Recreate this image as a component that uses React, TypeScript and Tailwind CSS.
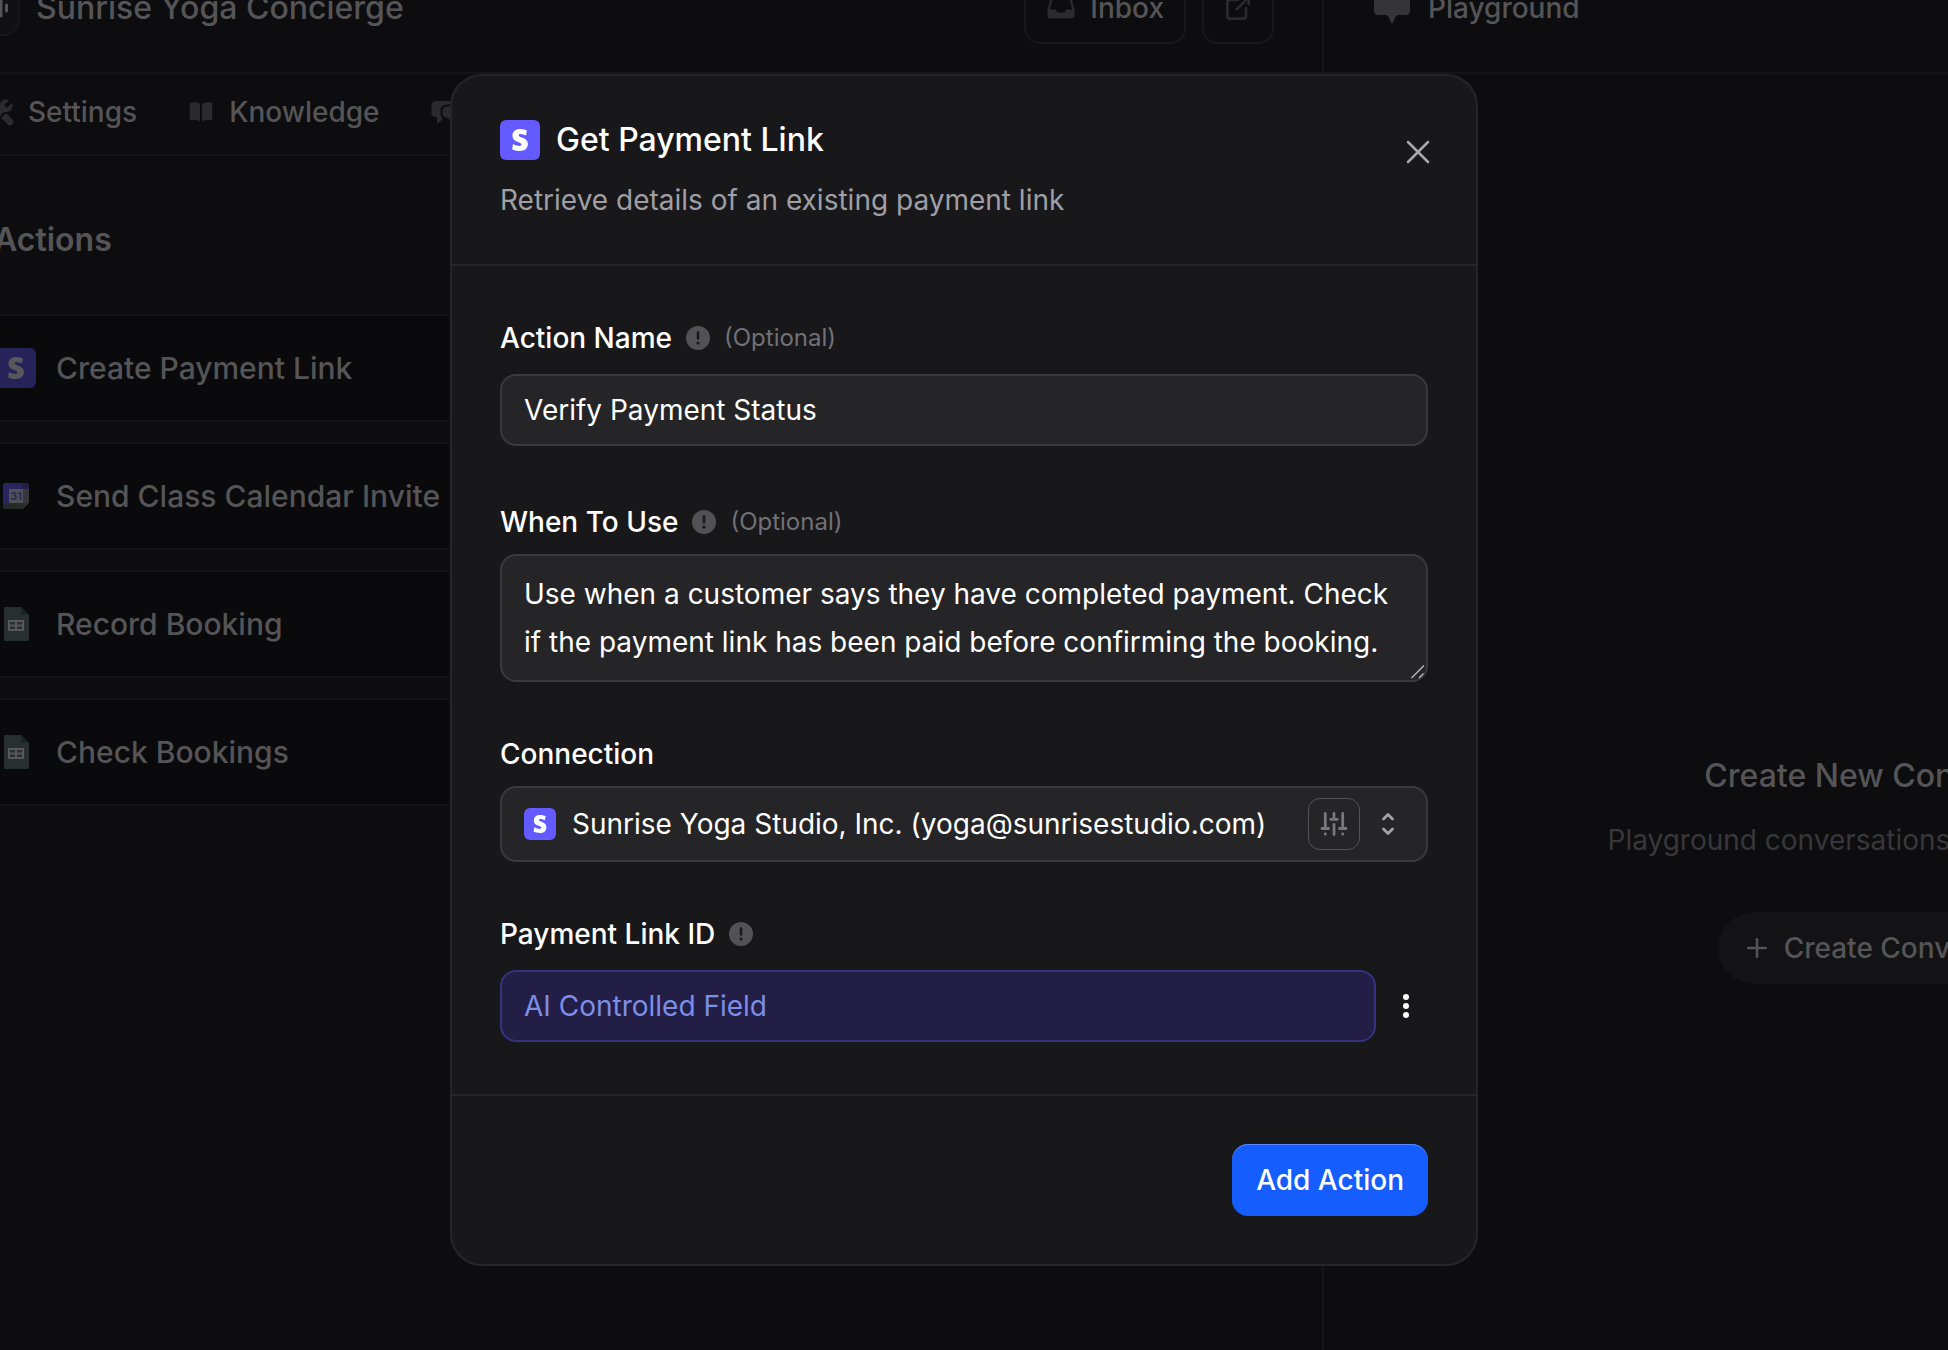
import type { ReactNode } from "react";
import { Plus, X } from "lucide-react";
import {
  HiMiniBookOpen,
  HiMiniChatBubbleLeftRight,
  HiMiniInbox,
  HiMiniWrenchScrewdriver,
} from "react-icons/hi2";
import { SiStripe } from "react-icons/si";
import { TbExternalLink } from "react-icons/tb";

function StripeLogo() {
  return (
    <span className="flex size-10 shrink-0 items-center justify-center rounded-md bg-[#635bff] text-white">
      <SiStripe size={22} />
    </span>
  );
}

function DimStripeLogo() {
  return (
    <span className="flex size-10 items-center justify-center rounded-md bg-[#27235a] text-[#58585b]">
      <SiStripe size={22} />
    </span>
  );
}

function CalendarLogo() {
  return (
    <svg viewBox="0 0 40 40" className="size-10">
      <path d="M9 7h17v6H13v14H7V9a2 2 0 0 1 2-2z" fill="#282560" />
      <path d="M26 7h5a2 2 0 0 1 2 2v4h-7z" fill="#231f4c" />
      <path d="M27 13h6v14h-6z" fill="#38383c" />
      <path d="M13 27h14v6H13z" fill="#262b2a" />
      <path d="M7 27h6v6H9a2 2 0 0 1-2-2z" fill="#232a2a" />
      <path d="M27 27h6l-6 6z" fill="#303034" />
      <path d="M13 13h14v14H13z" fill="#515155" />
      <text
        x="20"
        y="24"
        textAnchor="middle"
        fontSize="11"
        fontWeight="600"
        fill="#28245c"
      >
        31
      </text>
    </svg>
  );
}

function SheetsLogo() {
  return (
    <svg viewBox="0 0 40 40" className="size-10">
      <path d="M10 3h15l8 8v24a2 2 0 0 1-2 2H10a2 2 0 0 1-2-2V5a2 2 0 0 1 2-2z" fill="#28302e" />
      <path d="M25 3l8 8h-6a2 2 0 0 1-2-2z" fill="#1d2422" />
      <rect x="13" y="17" width="14" height="9" fill="none" stroke="#58585b" strokeWidth="2" />
      <path d="M20 17v9M13 21.5h14" stroke="#58585b" strokeWidth="2" />
    </svg>
  );
}

function InfoIcon() {
  return (
    <svg viewBox="0 0 24 24" className="size-6 shrink-0">
      <circle cx="12" cy="12" r="12" fill="#525256" />
      <path d="M12 6.5v6" stroke="#18181a" strokeWidth="2.5" strokeLinecap="round" />
      <circle cx="12" cy="17" r="1.6" fill="#18181a" />
    </svg>
  );
}

function Label({
  htmlFor,
  children,
  info,
  optional,
}: {
  htmlFor: string;
  children: ReactNode;
  info?: boolean;
  optional?: boolean;
}) {
  return (
    <div className="flex h-10 items-center">
      <label htmlFor={htmlFor} className="text-[28px] font-medium text-white">
        {children}
      </label>
      {info && (
        <span className="ml-3.5">
          <InfoIcon />
        </span>
      )}
      {optional && <span className="ml-3.5 text-2xl text-[#717177]">(Optional)</span>}
    </div>
  );
}

const actions = [
  { name: "Create Payment Link", logo: <DimStripeLogo /> },
  { name: "Send Class Calendar Invite", logo: <CalendarLogo /> },
  { name: "Record Booking", logo: <SheetsLogo /> },
  { name: "Check Bookings", logo: <SheetsLogo /> },
];

function AgentPage() {
  return (
    <main className="min-w-0 flex-1 border-r-2 border-[#151517]">
      <header className="flex h-[130px] items-center gap-4 border-b-2 border-[#151517] px-12">
        <span className="flex size-14 items-center justify-center rounded-2xl border-2 border-[#18181b] bg-[#111113]">
          <svg
            viewBox="0 0 32 32"
            className="size-8 overflow-visible"
            stroke="#555558"
            strokeWidth="3"
            strokeLinecap="round"
          >
            <path d="M1.500 13v6M7 8v16M13 3v26M19 3v26M25 8v16M30.500 13v6" />
          </svg>
        </span>
        <h1 className="text-[32px] font-medium text-[#555558]">Sunrise Yoga Concierge</h1>
        <button className="ml-auto flex h-18 items-center gap-3.5 rounded-2xl border-2 border-[#18181b] px-5 text-[28px] font-medium text-[#555558]">
          <HiMiniInbox size={30} className="text-[#2b2b2e]" />
          Inbox
        </button>
        <button
          aria-label="Open in new tab"
          className="flex size-18 items-center justify-center rounded-2xl border-2 border-[#18181b] text-[#2b2b2e]"
        >
          <TbExternalLink size={32} />
        </button>
      </header>

      <nav className="flex h-[82px] items-center gap-[50px] border-b-2 border-[#151517] pb-1 pl-[70px] text-[28px] font-medium text-[#555558]">
        <a href="#settings" className="flex items-center gap-3.5">
          <HiMiniWrenchScrewdriver size={28} className="text-[#2b2b2e]" />
          Settings
        </a>
        <a href="#knowledge" className="flex items-center gap-3.5">
          <HiMiniBookOpen size={28} className="text-[#2b2b2e]" />
          Knowledge
        </a>
        <a href="#conversations" aria-label="Conversations">
          <HiMiniChatBubbleLeftRight size={28} className="text-[#2b2b2e]" />
        </a>
      </nav>

      <section className="px-12 pt-16">
        <h2 className="pl-[30px] text-[32px] leading-10 font-semibold text-[#555558]">Actions</h2>
        <ul className="mt-[54px] flex flex-col gap-5">
          {actions.map((action) => (
            <li
              key={action.name}
              className="flex h-[108px] items-center gap-5 rounded-2xl border-2 border-[#131315] bg-[#0a0a0c] px-[30px] text-[30px] font-medium text-[#555558]"
            >
              {action.logo}
              {action.name}
            </li>
          ))}
        </ul>
      </section>
    </main>
  );
}

function Playground() {
  return (
    <aside className="flex w-[1152px] shrink-0 flex-col">
      <header className="flex h-[130px] items-center gap-4 border-b-2 border-[#151517] px-12">
        <svg viewBox="0 0 40 40" className="size-10" fill="#353538">
          <path d="M7 0h26a5 5 0 0 1 5 5v18a4 4 0 0 1-4 4h-7c-2 0-3 1-4 3l-2 4.500a1 1 0 0 1-2 0L17 30c-1-2-2-3-4-3H6a4 4 0 0 1-4-4V5a5 5 0 0 1 5-5z" />
        </svg>
        <h2 className="text-[28px] font-medium text-[#555558]">Playground</h2>
      </header>
      <div className="flex flex-col items-center pt-[682px] text-[#555558]">
        <h3 className="text-[32px] leading-10 font-medium">Create New Conversation</h3>
        <p className="mt-6 text-[28px] leading-10 text-[#38383b]">
          Playground conversations are not monitored
        </p>
        <button className="mt-[52px] flex h-18 items-center gap-3 rounded-full bg-[#131315] px-6 text-[28px] font-medium">
          <Plus size={30} />
          Create Conversation
        </button>
      </div>
    </aside>
  );
}

function ActionDialog() {
  return (
    <div
      role="dialog"
      aria-labelledby="dialog-title"
      className="w-[1028px] rounded-[32px] border-2 border-[#262628] bg-[#18181a]"
    >
      <header className="flex justify-between border-b-2 border-[#262628] px-12 py-11">
        <div>
          <div className="flex h-10 items-center gap-4">
            <StripeLogo />
            <h2 id="dialog-title" className="text-[32px] font-medium text-white">
              Get Payment Link
            </h2>
          </div>
          <p className="mt-5 text-[28px] leading-10 text-[#9f9fa5]">
            Retrieve details of an existing payment link
          </p>
        </div>
        <button aria-label="Close" className="-mr-2.5 mt-3 size-10 text-[#a9a9ad]">
          <X size={40} strokeWidth={1.5} />
        </button>
      </header>

      <form className="px-12 py-[52px] text-[28px]">
        <Label htmlFor="action-name" info optional>
          Action Name
        </Label>
        <input
          id="action-name"
          defaultValue="Verify Payment Status"
          className="mt-4 block h-18 w-full rounded-2xl border-2 border-[#3a3a3c] bg-[#252527] px-[22px] text-white"
        />

        <div className="mt-14">
          <Label htmlFor="when-to-use" info optional>
            When To Use
          </Label>
          <div className="relative mt-3">
            <textarea
              id="when-to-use"
              rows={2}
              defaultValue="Use when a customer says they have completed payment. Check if the payment link has been paid before confirming the booking."
              className="block h-32 w-full resize-none overflow-hidden rounded-2xl border-2 border-[#3a3a3c] bg-[#252527] px-[22px] py-3.5 leading-12 text-white"
            />
            {/* Resize grip */}
            <svg
              viewBox="0 0 16 16"
              className="pointer-events-none absolute right-0.5 bottom-0.5 size-4"
              stroke="#b4b4b6"
              strokeWidth="1.5"
            >
              <path d="M1.500 14 14 1.500M9 14l4.500-4.500" />
            </svg>
          </div>
        </div>

        <div className="mt-[52px]">
          <Label htmlFor="connection">Connection</Label>
          <div className="mt-3 flex h-[76px] items-center rounded-2xl border-2 border-[#3a3a3c] bg-[#252527] pr-6 pl-[22px]">
            <span className="flex size-8 shrink-0 items-center justify-center rounded-md bg-[#635bff] text-white">
              <SiStripe size={18} />
            </span>
            <select
              id="connection"
              className="ml-4 h-full min-w-0 flex-1 appearance-none bg-transparent text-white"
            >
              <option>Sunrise Yoga Studio, Inc. (yoga@sunrisestudio.com)</option>
            </select>
            <button
              type="button"
              aria-label="Manage connections"
              className="flex size-13 items-center justify-center rounded-xl border border-[#545458]"
            >
              <svg
                viewBox="0 0 28 28"
                className="size-7"
                fill="none"
                stroke="#77777d"
                strokeWidth="2.8"
                strokeLinecap="round"
              >
                <path d="M5.300 3.500v15M2 18.500h6.600M5.300 24v.2" />
                <path d="M14 3.500v5.800M10.700 9.300h6.600M14 14.500v10" />
                <path d="M22.700 3.500v15M19.400 18.500H26M22.700 24v.2" />
              </svg>
            </button>
            <svg
              viewBox="0 0 28 28"
              className="ml-3.5 size-7"
              fill="none"
              stroke="#a2a2a7"
              strokeWidth="2.8"
              strokeLinecap="round"
              strokeLinejoin="round"
            >
              <path d="M9.500 9 14 4.500 18.500 9M9.500 19l4.500 4.500 4.500-4.500" />
            </svg>
          </div>
        </div>

        <div className="mt-[52px]">
          <Label htmlFor="payment-link-id" info>
            Payment Link ID
          </Label>
          <div className="mt-4 flex items-center gap-2">
            <input
              id="payment-link-id"
              placeholder="AI Controlled Field"
              className="h-18 min-w-0 flex-1 rounded-2xl border-2 border-[#35327f] bg-[#231e46] px-[22px] placeholder:text-[#7c8ee6]"
            />
            <button
              type="button"
              aria-label="Field options"
              className="flex size-11 items-center justify-center"
            >
              <svg viewBox="0 0 24 24" className="size-6" fill="white">
                <circle cx="12" cy="3" r="3" />
                <circle cx="12" cy="12" r="3" />
                <circle cx="12" cy="21" r="3" />
              </svg>
            </button>
          </div>
        </div>
      </form>

      <footer className="flex justify-end border-t-2 border-[#262628] p-12">
        <button className="h-18 rounded-2xl bg-[#155dfc] px-6 text-[28px] font-medium text-white shadow-[inset_0_1px_0_#5b86ff]">
          Add Action
        </button>
      </footer>
    </div>
  );
}

export default function App() {
  return (
    <div className="relative h-screen overflow-hidden bg-[#0d0d0f] font-['Inter',sans-serif]">
      {/* Dimmed app shell, panned so that only part of it is on screen */}
      <div className="-mt-14 -mr-[528px] -ml-[84px] flex h-[1406px]">
        <AgentPage />
        <Playground />
      </div>
      <div className="absolute inset-0 flex items-center justify-center pr-5 pb-2.5">
        <ActionDialog />
      </div>
    </div>
  );
}
